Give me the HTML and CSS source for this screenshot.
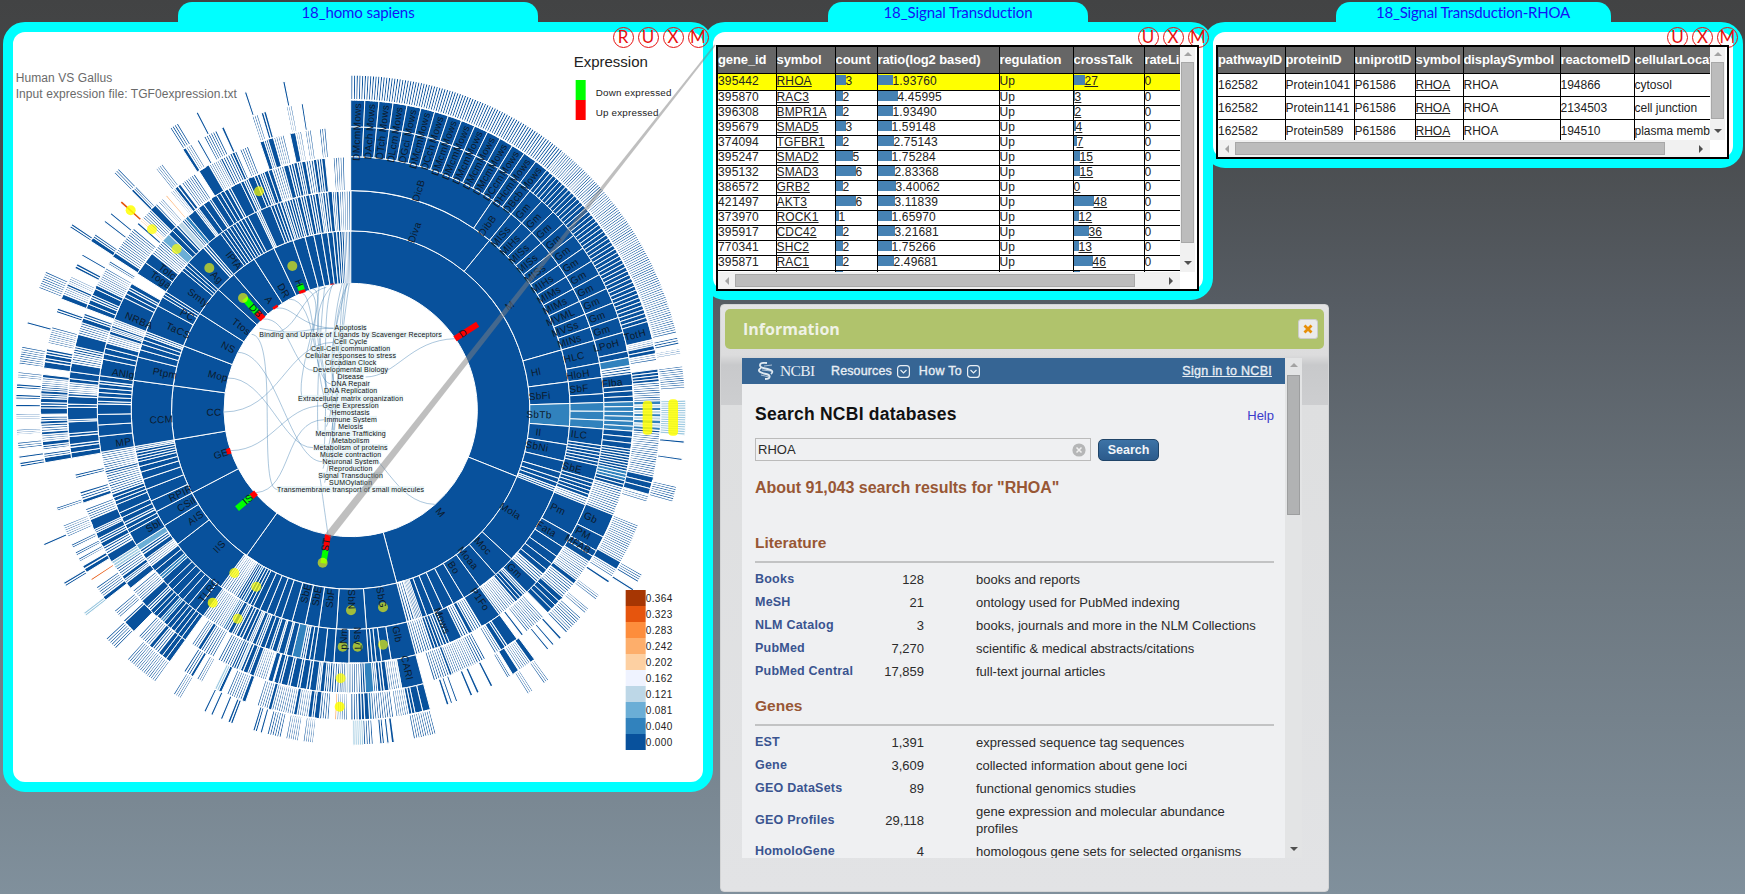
FILE: index.html
```html
<!DOCTYPE html>
<html lang="en">
<head>
<meta charset="utf-8">
<title>Pathway explorer</title>
<link rel="stylesheet" href="styles.css">
</head>
<body>
<section class="win win-main">
  <h2 class="tab">18_homo sapiens</h2>
  <div class="frame">
    <svg id="chart" class="chart" viewBox="40 96 2070 2250"></svg>
  </div>
  <div class="tools"><i>R</i><i>U</i><i>X</i><i>M</i></div>
</section>

<section class="win win-genes">
  <h2 class="tab">18_Signal Transduction</h2>
  <div class="frame"></div>
  <div class="tools"><i>U</i><i>X</i><i>M</i></div>
  <div class="grid">
    <div class="view">
      <table class="genes">
        <colgroup><col style="width:58px"><col style="width:59px"><col style="width:42px"><col style="width:122px"><col style="width:74px"><col style="width:71px"><col style="width:80px"></colgroup>
        <thead><tr><th>gene_id</th><th>symbol</th><th>count</th><th>ratio(log2 based)</th><th>regulation</th><th>crossTalk</th><th>rateLimit</th></tr></thead>
        <tbody id="genes"></tbody>
      </table>
    </div>
    <div class="vbar"><b class="up"></b><span class="thumb" style="height:181px"></span><b class="down"></b></div>
    <div class="hbar"><b class="left"></b><span class="thumb" style="width:400px"></span><b class="right"></b></div>
  </div>
</section>

<section class="win win-protein">
  <h2 class="tab">18_Signal Transduction-RHOA</h2>
  <div class="frame"></div>
  <div class="tools"><i>U</i><i>X</i><i>M</i></div>
  <div class="grid">
    <div class="view">
      <table class="proteins">
        <colgroup><col style="width:67px"><col style="width:69px"><col style="width:61px"><col style="width:48px"><col style="width:97px"><col style="width:74px"><col style="width:120px"></colgroup>
        <thead><tr><th>pathwayID</th><th>proteinID</th><th>uniprotID</th><th>symbol</th><th>displaySymbol</th><th>reactomeID</th><th>cellularLocation</th></tr></thead>
        <tbody>
          <tr><td>162582</td><td>Protein1041</td><td>P61586</td><td><u>RHOA</u></td><td>RHOA</td><td>194866</td><td>cytosol</td></tr>
          <tr><td>162582</td><td>Protein1141</td><td>P61586</td><td><u>RHOA</u></td><td>RHOA</td><td>2134503</td><td>cell junction</td></tr>
          <tr><td>162582</td><td>Protein589</td><td>P61586</td><td><u>RHOA</u></td><td>RHOA</td><td>194510</td><td>plasma membrane</td></tr>
        </tbody>
      </table>
    </div>
    <div class="vbar"><b class="up"></b><span class="thumb" style="height:57px"></span><b class="down"></b></div>
    <div class="hbar"><b class="left"></b><span class="thumb" style="width:430px"></span><b class="right"></b></div>
  </div>
</section>

<svg class="link" viewBox="0 0 720 560"><polygon points="714.3,44.5 715.7,45.5 331.500,538 325.500,533.500"/></svg>

<section class="dialog">
  <header class="dialog-head"><h3>Information</h3><button class="close"><svg viewBox="0 0 10 10"><path d="M1.5 1.5 8.5 8.5M8.5 1.5 1.5 8.5"/></svg></button></header>
  <div class="browser">
    <div class="page">
      <nav class="nav">
        <svg class="helix" viewBox="0 0 16 18"><path d="M9 1C0 0 0 5 7 6.500S16 9 13 12M3 6C-2 9 3 11 8 12S13 17 7 17"/><path class="thin" d="M6 4 14 3M4 8 13 9M3 13 11 15"/></svg>
        <span class="brand">NCBI</span>
        <span class="menu">Resources</span><svg class="drop" viewBox="0 0 13 13"><rect x=".6" y=".6" width="11.800" height="11.800" rx="3"/><path d="M3.500 5 6.500 8 9.500 5"/></svg>
        <span class="menu second">How To</span><svg class="drop" viewBox="0 0 13 13"><rect x=".6" y=".6" width="11.800" height="11.800" rx="3"/><path d="M3.500 5 6.500 8 9.500 5"/></svg>
        <span class="signin">Sign in to NCBI</span>
      </nav>
      <div class="content">
        <div class="title"><h1>Search NCBI databases</h1><a>Help</a></div>
        <div class="search"><div class="field"><span>RHOA</span><svg viewBox="0 0 14 14"><circle cx="7" cy="7" r="6.600"/><path d="M4.500 4.500 9.500 9.500M9.500 4.500 4.500 9.500"/></svg></div><div class="go">Search</div></div>
        <h4 class="about">About 91,043 search results for "RHOA"</h4>
        <h4 class="group">Literature</h4>
        <dl>
          <div><dt>Books</dt><dd class="n">128</dd><dd>books and reports</dd></div>
          <div><dt>MeSH</dt><dd class="n">21</dd><dd>ontology used for PubMed indexing</dd></div>
          <div><dt>NLM Catalog</dt><dd class="n">3</dd><dd>books, journals and more in the NLM Collections</dd></div>
          <div><dt>PubMed</dt><dd class="n">7,270</dd><dd>scientific &amp; medical abstracts/citations</dd></div>
          <div><dt>PubMed Central</dt><dd class="n">17,859</dd><dd>full-text journal articles</dd></div>
        </dl>
        <h4 class="group">Genes</h4>
        <dl>
          <div><dt>EST</dt><dd class="n">1,391</dd><dd>expressed sequence tag sequences</dd></div>
          <div><dt>Gene</dt><dd class="n">3,609</dd><dd>collected information about gene loci</dd></div>
          <div><dt>GEO DataSets</dt><dd class="n">89</dd><dd>functional genomics studies</dd></div>
          <div><dt>GEO Profiles</dt><dd class="n">29,118</dd><dd>gene expression and molecular abundance<br>profiles</dd></div>
          <div><dt>HomoloGene</dt><dd class="n">4</dd><dd>homologous gene sets for selected organisms</dd></div>
        </dl>
      </div>
    </div>
    <div class="vbar"><b class="up"></b><span class="thumb" style="height:140px"></span><b class="down"></b></div>
  </div>
</section>
<script src="chart.js"></script>
</body>
</html>
```
FILE: styles.css
```css
* { box-sizing: border-box; }
html, body { height: 100%; }
body {
  margin: 0;
  overflow: hidden;
  position: relative;
  font-family: "Liberation Sans", Arial, sans-serif;
  background: linear-gradient(#424344 0, #464849 100px, #565c63 300px, #69737b 520px, #7a8893 800px, #80909c 894px);
}
h1, h2, h3, h4, dl, dd { margin: 0; }

/* floating windows */
.win { position: absolute; top: 2px; display: flex; flex-direction: column; align-items: center; }
.win-main { left: 3px; width: 710px; height: 790px; z-index: 3; }
.win-genes { left: 703px; width: 510px; height: 298px; z-index: 2; }
.win-protein { left: 1203px; width: 540px; height: 166px; z-index: 1; }
.tab {
  height: 20px;
  border-radius: 14px 14px 0 0;
  background: #0ff;
  color: #1414f5;
  font: 400 15px/20px Lato, sans-serif;
  letter-spacing: -.1px;
  text-align: center;
}
.win-main .tab { width: 360px; }
.win-genes .tab { width: 260px; }
.win-protein .tab { width: 275px; letter-spacing: -.2px; }
.frame { flex: 1; width: 100%; border: 10px solid #0ff; border-radius: 22px; background: #fff; }
.chart { display: block; width: 690px; height: 750px; }
.tools { position: absolute; top: 25px; right: 5px; display: flex; gap: 4px; }
.win-main .tools, .win-genes .tools { right: 4.5px; }
.tools i {
  width: 21px; height: 21px;
  border: 1.3px solid #e81010; border-radius: 50%;
  color: #e81010;
  font: 400 17px/18px Lato, sans-serif;
  display: flex; justify-content: center;
}
.link { position: absolute; z-index: 4; left: 0; top: 0; width: 720px; height: 560px; fill: #808080; fill-opacity: .5; }

/* scrolling grids */
.grid {
  position: absolute; left: 13px; top: 43px;
  display: grid;
  border: 2px solid #000;
  background: #fff;
}
.win-genes .grid { width: 483px; height: 246px; grid-template: 225px 17px / 462px 15px; }
.win-protein .grid { width: 513px; height: 114px; grid-template: 93px 17px / 492px 15px; }
.view { overflow: hidden; }
table { border-collapse: collapse; table-layout: fixed; font-size: 12px; color: #222; }
.genes { width: 506px; }
.proteins { width: 536px; }
th, td { padding: 0; border-right: 1px solid #000; border-bottom: 1px solid #000; text-align: left; white-space: nowrap; overflow: hidden; }
th { height: 26px; background: #666; color: #fff; font-size: 13px; font-weight: 700; letter-spacing: -.1px; }
.genes td { height: 15px; line-height: 13px; letter-spacing: .15px; }
.genes tr.hit td { height: 17px; background: #ff0; }
.proteins td { height: 23px; }
.bar { display: inline-block; height: 10px; background: #4682b4; }
.vbar { background: #f1f1f1; display: flex; flex-direction: column; align-items: center; }
.hbar { background: #f1f1f1; display: flex; align-items: center; grid-column: 1; }
.vbar b, .hbar b { border: 4px solid transparent; }
.vbar .up { margin: 3px 0 5px; border-bottom: 4px solid #a3a3a3; border-top-width: 2px; }
.vbar .down { margin-top: auto; margin-bottom: 3px; border-top: 4px solid #505050; }
.hbar .left { margin: 0 6px 0 3px; border-right-color: #a3a3a3; }
.hbar .right { margin-left: auto; margin-right: 3px; border-left-color: #505050; }
.thumb { background: #bcbcbc; border: 1px solid #a8a8a8; }
.vbar .thumb { width: 13px; margin-top: 1px; }
.hbar .thumb { height: 13px; }

/* information dialog */
.dialog {
  position: absolute; left: 720px; top: 304px; width: 609px; height: 588px;
  border: 1px solid #d3d4d5; border-radius: 4px;
  background: linear-gradient(#e4e4e4 0, #dcdcdd 50px, #c8c9cb 60px, #cdced0 100px, #dedfe0 100px, #e2e3e5 587px);
  padding: 4px;
}
.dialog-head {
  height: 40px; border-radius: 5px; background: #b0c36c;
  display: flex; align-items: center; justify-content: space-between; padding: 0 6px 0 18px;
}
.dialog-head h3 { color: #eff2e6; font: 700 16px "Open Sans", sans-serif; }
.close { width: 20px; height: 20px; padding: 0; border: 1px solid #ccc; border-radius: 3px; background: #ebebeb; display: grid; place-items: center; }
.close svg { width: 10px; height: 10px; stroke: #e78f08; stroke-width: 2.8; fill: none; }
.browser { margin: 9px 0 0 17px; width: 560px; height: 500px; display: flex; }
.page { width: 543px; height: 500px; overflow: hidden; background: #eff0f2; }
.browser .vbar { width: 17px; background: #e3e4e5; }
.browser .thumb { background: #b1b2b3; border-color: #9d9e9f; margin-top: 3px; }
.nav { height: 26px; background: #366594; color: #e8eef4; display: flex; align-items: center; padding: 0 13px 0 16px; font-size: 12.5px; -webkit-text-stroke: .35px #e8eef4; }
.helix { width: 16px; height: 18px; fill: none; stroke: #dfe8f0; stroke-width: 1.8; }
.helix .thin { stroke-width: .7; }
.brand { font: 15.5px "Liberation Serif", serif; width: 34px; margin: 0 17px 0 6px; letter-spacing: -.6px; -webkit-text-stroke: 0; }
.drop { width: 13px; height: 13px; margin-left: 5px; fill: none; stroke: #e8eef4; stroke-width: 1.2; }
.menu { letter-spacing: .12px; }
.second { margin-left: 9px; letter-spacing: .3px; }
.signin { margin-left: auto; text-decoration: underline; letter-spacing: .28px; }
.content { padding: 0 11px 0 13px; color: #2b2b2b; font-size: 13px; }
.title { display: flex; justify-content: space-between; align-items: center; height: 61px; }
.title h1 { font-size: 17.5px; color: #111; letter-spacing: .25px; }
.title a { color: #3b3bcb; padding-top: 2px; }
.search { display: flex; align-items: center; gap: 7px; margin-top: -7px; }
.field { width: 336px; height: 23px; border: 1px solid #bbb; display: flex; justify-content: space-between; align-items: center; padding: 0 4px 0 2px; }
.field svg { width: 14px; height: 14px; fill: #b5b6b7; stroke: #f0f0f0; stroke-width: 1.5; }
.field circle { stroke: none; }
.go { width: 61px; height: 22px; border: 1px solid #1f4468; border-radius: 5px; background: linear-gradient(#3d73a6, #2c5b8c); color: #f2f5f8; font-weight: 700; text-align: center; line-height: 20px; font-size: 12.5px; }
.about, .group { color: #985735; font-size: 16px; }
.about { margin-top: 17px; line-height: 20px; letter-spacing: -.02px; }
.group { font-size: 15.5px; line-height: 20px; padding-bottom: 8px; border-bottom: 2px solid #c2c3c4; margin: 35px 0 4.5px; }
dl + .group { margin-top: 13.5px; margin-bottom: 5px; }
dl > div { display: grid; grid-template-columns: 109px 60px 1fr; align-items: center; line-height: 17px; padding: 3px 0; }
dt { font-weight: 700; color: #3a5490; font-size: 12.5px; letter-spacing: .22px; white-space: nowrap; }
dd.n { text-align: right; }
dd:last-child { padding-left: 52px; white-space: nowrap; }

/* sunburst */
.chart text { font-family: "Liberation Sans", Arial, sans-serif; fill: #222; }
.chart .arc-label { font-size: 30px; fill: #0c1a2b; text-anchor: middle; letter-spacing: 1px; }
.chart .core { font-size: 21px; fill: #111; text-anchor: middle; letter-spacing: .5px; }
.chart .core-bg { fill: #e2f1f6; }
.chart .edge { fill: none; stroke: #4682b4; stroke-opacity: .45; stroke-width: 3; }
.chart .caption { font-size: 36px; fill: #6a6a6a; letter-spacing: .25px; }
.chart .legend-title { font-size: 45px; }
.chart .legend-item { font-size: 29.5px; letter-spacing: .6px; }
.chart .scale-item { font-size: 30px; letter-spacing: 1.2px; }
```
FILE: chart.js
```js
const svg = document.getElementById('chart');
const CX = 1053, CY = 1230;
const R = k => 380 * Math.sqrt(k);
const rad = d => d * Math.PI / 180;
const at = (r, d) => [CX + r * Math.sin(rad(d)), CY - r * Math.cos(rad(d))];

function add(tag, attrs, text) {
  const e = document.createElementNS('http://www.w3.org/2000/svg', tag);
  for (const k in attrs) e.setAttribute(k, attrs[k]);
  if (text !== undefined) e.textContent = text;
  svg.appendChild(e);
  return e;
}

const COLORS = { s: '#08519c', h: '#08519c', m: '#3182bd', l: '#6baed6', p: '#bdd7e7', e: '#9ecae1', o: '#fdae6b', r: '#e6550d' };

function arc(ring, a, b, fill, stroke) {
  const r0 = R(ring), r1 = R(ring + 1), big = b - a > 180 ? 1 : 0;
  const p = [at(r0, a), at(r1, a), at(r1, b), at(r0, b)].map(q => q.map(v => v.toFixed(1)).join(' '));
  add('path', {
    d: `M${p[0]}L${p[1]}A${r1} ${r1} 0 ${big} 1 ${p[2]}L${p[3]}A${r0} ${r0} 0 ${big} 0 ${p[0]}Z`,
    fill, stroke: '#fff', 'stroke-width': stroke
  });
}

let seed = 7;
const rnd = () => (seed = (seed * 16807) % 2147483647) / 2147483647;

function block(ring, a, b, code, n) {
  if (code === '-') return;
  if (code === 'd') {
    let x = a, dark = true;
    while (x < b - 0.1) {
      const end = Math.min(b, x + (dark ? 0.4 + rnd() * 0.8 : 0.4 + rnd() * 0.5));
      block(ring, x, end, dark ? 's' : 'h', 0);
      x = end;
      dark = rnd() > (dark ? 0.65 : 0.15);
    }
    return;
  }
  const fine = 'heor'.includes(code);
  if (!n) n = fine ? Math.max(1, Math.round(rad(b - a) * R(ring + 0.5) / 6.6)) : 1;
  const w = (b - a) / n;
  const stroke = code === 'h' ? (n > 80 ? 4.9 : n < 3 ? 3.6 : 4.7) : code === 'o' || code === 'r' ? 4.2 : 3;
  for (let i = 0; i < n; i++) arc(ring, a + i * w, a + (i + 1) * w, COLORS[code], stroke);
}

/* Each ring lists boundary angles; a letter sets the fill up to the next angle. */
const RINGS = [
  '0 111.8 165.1 215.6 242.4 260.4 277.8 291 302.6 312.3 319.2 327.4 334.6 341.2 345.2 348.1 350.6 352.6 354.3 355.5 356.4 357.2 357.9 358.4 358.9 359.4 360',
  '0 39.3 74.1 82.6 88.3 m 94.3 99.1 103.5 106.6 108.2 109.4 110.6 h 111.8 132.8 138.6 143.9 148.9 152.1 155.1 157.6 159.7 161 s5 163 h 165.1 175.9 183.7 188.4 192 195.5 198.4 200.4 202.5 204.5 206.4 s3 209 m 209.6 s3 211.5 h 216.3 232.2 238.2 242.4 245.5 248.8 251.5 253.5 255 256.3 s4 259.4 h 260.4 277.8 284 286 287.5 288.7 289.8 h 291 298.4 301 s2 302.6 309.6 s3 312.3 317.8 h 319.2 323.6 s4 327.4 s3 330 s2 332 s 334.6 h 335.6 338.6 s3 341.2 h 342 d 345.2 h 345.8 346.8 h 348.1 349.2 h 350.6 351.6 h 352.6 h 354 s 355.2 h 356.2 s 357 h 360',
  '0 34.1 39.3 s11 74.1 79.3 82.6 86.3 88.3 m3 94.3 98.1 s6 102.7 106 s5 110.4 h 112 119.5 122.9 125.4 127.4 129.2 130.5 h 132.8 136 h 137 s3 139.4 h 144 148.9 h 151.2 152.2 h 154 157 s2 158.4 h 159 s3 161.2 h 165.1 170.8 173 174.2 175.1 175.9 180.4 183.8 186 188.4 s2 190.4 h 191.4 m 193.4 s 194.8 h 195.2 196.6 h 197 198.2 h 198.7 s2 201 h 202 d 207 h 208 s 209 h 210 m 210.5 h 212 h 215.6 s2 219.8 221.5 223 224.8 226.3 228 m2 229.2 230.6 232 h 234 s 235.2 h 236.4 l 237.8 241 s2 243 h 243.6 s2 246 248 s3 250.6 h 255.6 s 256.2 h 260.4 264 266.6 269 271.4 h 272 s4 276 h 276.6 277.8 281.6 s3 285.4 h 287.4 s 288.2 h 289 s 289.6 h 291 296.4 s2 298.4 h 299 300 - 302.6 305.7 308.3 h 312 l 314 s 315.2 s 316.4 h 317 p 318.2 h 319.2 m 320 s 322.2 h 323 324.4 326 h 326.5 328 s3 331 h 331.6 334.2 335 h 336 s 337.6 s2 339 h 340 s2 342 h 344.6 s 345.8 h 347 s 347.8 h 348.8 s 349.8 h 351.5 s 352.3 h 353.4 s 354.2 - 356 h 358.6',
  '0 s13 34.1 s2 39.3 s11 74.1 78 79.3 m 81 h 82.6 85 s3 88.3 m6 94.3 s3 98 s8 102.5 m3 104.5 s2 106 h 111.8 116.7 119.8 s2 122.5 h 127 s 128 h 131.5 s4 135.8 - 137 h 141.6 - 142.4 h 142.9 - 144 s 146.4 h 146.9 s 148 h 149.4 - 151.5 h 153.6 h 159 s 159.6 h 163 - 165.1 169.6 p 170 h 172.2 s 173.2 h 173.8 s 174.5 h 175.3 m 177 s2 178 h 180.4 p 180.9 s 181.2 h 182 s 182.4 h 184 d 187 s 188.4 h 189 190.4 h 190.9 192.4 h 192.9 194.3 h 194.8 195.8 h 196 197 - 197.4 h 200 s 201 h 201.4 s 202.4 h 203 p 203.5 h 204.5 s 205 h 208 - 209 h 212 s 212.8 h 214.2 - 215.7 s6 221.4 m2 222.3 s3 225 h 226 s 227.6 h 230.4 - 231 s 232.4 h 233.2 s 234 h 236 e 237.6 s 239.4 h 241 s 242 h 243 s 244.2 h 245 s 247.2 h 249.6 - 250.8 s 251.6 h 253.2 - 256 h 256.9 - 260.2 s2 262.4 h 263 s 264.6 h 265.2 267.6 h 268 270.6 h 271.2 s 272.8 h 273.4 h 275.6 276.4 s 277.8 s 279.6 h 282 h 283 s 285.6 h 288 s 289 h 290 - 291 s2 293 h 294 s 295.4 s 296.2 h 300.2 - 301 h 301.8 - 302.8 s 303.8 h 310 - 311 h 311.5 - 311.9 o 312.7 h 315 s 316.4 h 316.8 - 317.2 h 318.4 - 319.1 o 319.5 - 320.4 h 321.6 s 322.3 h 323 - 323.3 h 326.6 - 327.6 s 330 h 332.6 s 333.1 h 335.2 s 335.8 h 336.2 - 336.9 h 338.8 - 341.3 s 342.2 h 343 s 344.2 h 346.4 - 347.6 s 348.8 h 350 - 350.7 h 352 - 353.6 h 355',
  '0 s13 34.1 s2 39.3 s44 73.4 76.9 h 78 s2 79.6 h 80.8 - 82.4 s4 84.8 h 88.3 m 89 p 89.5 m 90.1 p 90.7 m 91.3 p 91.9 m 92.6 p 93.2 m 93.8 h 94.3 h 102.5 s3 105.8 - 106.1 h 107.3 - 111.8 h 119.4 s 121 h 122.6 - 123.4 h 123.9 - 126.6 h 127.8 - 129.8 h 131 - 132 h 136 - 137.2 h 137.7 - 139 h 139.4 - 140.3 h 140.7 - 143.6 s 144.6 h 147 - 147.2 s 148.5 - 149 h 149.7 - 152.7 h 153.2 - 155.5 h 156 - 156.8 h 157.3 - 159.8 h 160.2 - 160.8 h 161.2 - 161.5 h 162 - 165.1 s2 168 s2 169.2 h 171.6 - 172 h 176 m 176.5 s 177.4 h 178 s 178.6 h 180 - 180.6 h 182.6 o 183 - 184 h 185.8 s 186.8 h 187.2 s 188 h 190 s 190.7 h 194.8 s 195.5 h 197.6 - 199.8 s 200.6 h 203.6 - 204.6 s 205.2 e 206 - 208.6 h 209.8 - 210.6 s 211.2 h 212.6 - 215.7 s3 218.4 h 219.8 s 220.6 h 223.2 - 224.4 s 226.8 h 227.2 - 228 h 229.7 - 232.2 s 233 h 235.2 - 236.6 r 237 - 238.4 s 239.2 h 239.8 - 240.7 h 241.4 - 242 h 242.7 - 243.6 h 244.3 - 245.8 h 248.2 - 251 h 251.7 - 260.2 261.2 h 262 - 262.6 h 263.4 264.2 h 265.4 266 h 267.4 s 268 h 268.8 - 269.2 s 270.4 h 271.4 s 272.2 h 273 s 273.6 h 274.4 h 276 s 276.6 - 277.8 s 279 h 279.6 s 280.4 h 281.4 - 282.4 h 285.6 - 288.3 h 289.2 - 291 s 292 h 293.6 s 294.1 h 295.6 - 297.2 h 298.2 - 299.8 h 300.2 - 303 s 303.8 h 304.6 - 307.3 h 307.7 - 309.1 h 309.5 - 311.9 r 312.5 - 315 s 315.5 h 316.2 - 321 h 322.6 - 327.2 s 327.9 h 329.1 - 330.3 h 330.7 - 331.7 h 334.4 - 335.4 h 335.9 - 341.4 h 342.6 - 343.2 h 344.2 - 348 h 349.1 - 350.8 h 351.2',
  '0 h85 39.3 h 42.4 h 45.6 h 48.8 h 51.9 h 55.1 h 58.3 h 61.4 h 64.6 h 67.8 h 70.9 h 74 h 76.7 - 77.4 h 78.7 - 79.4 h 80.4 - 82.4 h 86.3 - 88.3 e 94.3 - 95.3 h 95.7 - 98.3 h 98.7 - 103.2 h 106 - 119.4 h 121 - 122.3 h 122.7 - 143.7 h 144.8 - 147 h 148.1 - 165.2 h 169.2 - 172.5 h 173 - 173.4 h 173.8 - 174.2 h 175 - 176.1 h 177.8 e 179.6 - 186.4 h 188.2 - 189 h 191.2 - 192 h 194.5 - 195.3 h 195.7 - 196.2 h 197 - 200.6 h 201.5 - 202.5 h 202.9 - 204.3 h 204.7 - 205.6 h 206 - 210.5 h 212 - 215.7 h 221.9 - 224.5 h 227 - 232.1 e 232.8 - 238.2 h 239 - 246.1 h 246.5 - 260.2 h 261 - 261.7 h 262.1 - 263.3 h 264.5 - 265.7 h 266.7 - 268.4 h 269.4 - 270.6 h 271 - 271.9 h 272.7 - 273.7 h 274.5 - 275.5 h 276.6 - 277.9 h 281 - 284.9 h 285.3 - 291.3 h 294.5 - 303 h 303.8 - 315 h 316.2 - 327.3 h 329 - 332.5 h 332.9 - 341.5 h 341.9 - 348.3 h 348.7'
];

RINGS.forEach((spec, i) => {
  const tokens = spec.split(' ');
  let prev = +tokens[0], code = 's', n = 0;
  for (const t of tokens.slice(1)) {
    if (/^\d/.test(t)) {
      block(i + 1, prev, +t, code, n);
      prev = +t; code = 's'; n = 0;
    } else {
      code = t[0]; n = +t.slice(1) || 0;
    }
  }
});

/* expression bars */
[['#f00', 18, 1366, 1016, 1434, 973], ['#f00', 18, 985, 1604, 978, 1650], ['#0f0', 18, 978, 1650, 971, 1690],
 ['#f00', 18, 769, 1478, 755, 1490], ['#0f0', 18, 755, 1490, 712, 1526], ['#f00', 18, 693, 1352, 680, 1356],
 ['#f00', 20, 790, 957, 772, 938], ['#0f0', 20, 772, 938, 735, 895], ['#f00', 8, 820, 926, 834, 917],
 ['#f00', 20, 909, 879, 906, 870], ['#0f0', 20, 906, 870, 900, 852], ['#f00', 3, 992, 853, 1004, 852]
].forEach(([c, w, x1, y1, x2, y2]) => add('line', { x1, y1, x2, y2, stroke: c, 'stroke-width': w }));

/* highlighted nodes */
[[393, 631, .85], [457, 688, .75], [531, 747, .7], [629, 804], [730, 894], [878, 798], [778, 574, .7], [969, 1688], [704, 1719, .75],
 [770, 1760, .7], [639, 1808, .8], [714, 1856, .7], [1054, 1831], [1029, 1940], [1074, 1940], [1023, 2035, .75], [1020, 2120, .85],
 [1150, 1822], [1150, 1934]
].forEach(([cx, cy, o]) => add('circle', { cx, cy, r: 15, fill: '#ff0', 'fill-opacity': o || .62 }));
add('rect', { x: 1929, y: 1202, width: 29, height: 102, rx: 12, fill: '#ff0', 'fill-opacity': .85 });
add('rect', { x: 2006, y: 1198, width: 29, height: 109, rx: 12, fill: '#ff0', 'fill-opacity': .85 });

/* arc labels follow the radius and are flipped on the left half */
function label(text, x, y) {
  let a = Math.atan2(y - CY, x - CX) * 180 / Math.PI;
  if (x < CX - 12) a += 180;
  add('text', { class: 'arc-label', transform: `translate(${x.toFixed(1)} ${y.toFixed(1)}) rotate(${a.toFixed(1)})`, dy: 10 }, text);
}
function row(words, ring, a0, a1) {
  const w = (a1 - a0) / words.length;
  words.forEach((t, i) => { const [x, y] = at(ring, a0 + (i + .5) * w); label(t, x, y); });
}
row(['DMcm', 'DAch', 'DTch', 'DLcm', 'DGci', 'DMcm', 'DCch', 'DMcm', 'DMcm', 'DMcm', 'DMcm', 'DMcm', 'DCcm', 'DHcm', 'DBcb'], 793, 0, 39.3);
row(Array(15).fill('Mows'), 880, 0, 39.3);
row(['MISs', 'MIHs', 'MISs', 'MISs', 'MISs', 'MIHs', 'MIMs', 'MIMs', 'MVML', 'MVSs', 'MINs'], 688, 39.3, 74.1);
row(Array(11).fill('Gm'), 790, 39.3, 74.1);
[['DicB', 1257, 572], ['Diva', 1245, 697], ['DibB', 1463, 677], ['M', 1530, 917], ['D', 1391, 1000], ['HLC', 1723, 1072], ['LPoH', 1820, 1037],
 ['TotH', 1906, 1005], ['Hl', 1609, 1117], ['HloH', 1735, 1124], ['SbF', 1738, 1166], ['Flba', 1838, 1149], ['SbFi', 1620, 1188], ['SbTb', 1618, 1244],
 ['Il', 1616, 1297], ['ILC', 1738, 1304], ['SbNi', 1612, 1339], ['SbE', 1718, 1403], ['Mola', 1532, 1533], ['Pm', 1675, 1527], ['Gb', 1773, 1553],
 ['Fata', 1640, 1587], ['PM', 1750, 1600], ['MFAB', 1735, 1632], ['M', 1322, 1538], ['Moc', 1450, 1638], ['Gm', 1545, 1712], ['Moaa', 1405, 1674],
 ['Bo', 1362, 1703], ['P1Fo', 1441, 1798], ['Mows', 1328, 1862], ['SbG', 1145, 1792], ['Glb', 1193, 1903], ['CARl', 1222, 2003], ['SbN', 1056, 1798],
 ['NsvT', 1074, 1918], ['pNm', 1032, 1916], ['SbF', 992, 1795], ['SbE', 952, 1788], ['SbE', 919, 1780], ['ST', 979, 1634], ['TLRC', 628, 1771],
 ['IIS', 659, 1640], ['AIS', 588, 1554], ['CSil', 560, 1513], ['RPIR', 543, 1480], ['Sbl', 461, 1578], ['IS', 745, 1498], ['GE', 664, 1362],
 ['CC', 643, 1237], ['CCM', 485, 1259], ['MP', 371, 1327], ['Mop', 655, 1128], ['Ptpm', 496, 1120], ['ANlg', 371, 1121], ['NS', 686, 1042],
 ['TaCS', 536, 992], ['PC', 563, 945], ['NRBA', 418, 962], ['Ttos', 725, 980], ['Smty', 596, 893], ['Toga', 484, 840], ['Tolc', 503, 815],
 ['DB', 768, 932], ['Ag', 652, 832], ['lPfA', 703, 782], ['A', 808, 900], ['DR', 852, 872], ['H', 898, 850]
].forEach(l => label(...l));

/* links between names and their arcs */
const edges = ['M780 985C900 1010 900 985 1000 985', 'M830 925C880 915 900 985 1010 985', 'M790 957C870 950 880 1111 940 1111', 'M868 897C960 900 930 1140 995 1153',
 'M756 1003C840 1010 770 1480 835 1468', 'M715 1057C830 1060 870 1385 968 1385', 'M683 1134C800 1130 850 1345 940 1343', 'M673 1236C840 1235 860 1030 1000 1027',
 'M693 1352C820 1350 850 1217 970 1217', 'M769 1478C880 1470 850 1260 975 1259', 'M985 1604C970 1500 965 1460 960 1427', 'M1366 1016C1230 1020 1190 1130 1098 1131',
 'M1305 1513C1180 1510 1150 1340 1050 1330', 'M820 1000C900 990 900 880 980 862', 'M908 880C950 890 950 1230 1000 1237', 'M925 870C985 900 910 1080 940 1048',
 'M940 866C990 880 890 1100 906 1190', 'M958 862C940 1000 1000 1250 985 1170', 'M975 860C960 1000 950 1200 955 1300', 'M1000 852C960 930 990 1200 970 1385',
 'M1003 852C900 950 990 1130 985 1230', 'M1028 850C985 1000 1000 1200 1000 1406', 'M1034 850C1010 1000 1030 1200 970 1406', 'M1040 850C1020 1000 1020 1250 975 1448',
 'M1045 850C980 960 1020 1200 980 1280', 'M1049 850C1010 1100 1010 1300 990 1427', 'M1043 850C1000 1000 980 1100 1010 1164'];
edges.forEach(d => add('path', { class: 'edge', d }));

const names = ['Apoptosis', 'Binding and Uptake of Ligands by Scavenger Receptors', 'Cell Cycle', 'Cell-Cell communication', 'Cellular responses to stress',
 'Circadian Clock', 'Developmental Biology', 'Disease', 'DNA Repair', 'DNA Replication', 'Extracellular matrix organization', 'Gene Expression', 'Hemostasis',
 'Immune System', 'Meiosis', 'Membrane Trafficking', 'Metabolism', 'Metabolism of proteins', 'Muscle contraction', 'Neuronal System', 'Reproduction',
 'Signal Transduction', 'SUMOylation', 'Transmembrane transport of small molecules'];
names.forEach((t, i) => {
  const y = 984 + i * 21.05;
  const bg = add('rect', { class: 'core-bg', 'fill-opacity': .75 });
  const e = add('text', { class: 'core', x: 1053, y: y + 7 }, t);
  const w = e.getComputedTextLength();
  bg.setAttribute('x', 1053 - w / 2); bg.setAttribute('y', y - 10);
  bg.setAttribute('width', w); bg.setAttribute('height', 20);
});

/* captions and legends */
add('text', { class: 'caption', x: 48, y: 246 }, 'Human VS Gallus');
add('text', { class: 'caption', x: 48, y: 294 }, 'Input expression file: TGF0expression.txt');
add('text', { class: 'legend-title', x: 1722, y: 201 }, 'Expression');
add('rect', { x: 1728, y: 240, width: 30, height: 60, fill: '#0f0' });
add('rect', { x: 1728, y: 300, width: 30, height: 60, fill: '#f00' });
add('text', { class: 'legend-item', x: 1788, y: 289 }, 'Down expressed');
add('text', { class: 'legend-item', x: 1788, y: 349 }, 'Up expressed');
['#a63603', '#e6550d', '#fd8d3c', '#fdae6b', '#fdd0a2', '#eff3ff', '#bdd7e7', '#6baed6', '#3182bd', '#08519c'].forEach((fill, i) => {
  add('rect', { x: 1878, y: 1770 + i * 48, width: 60, height: 48, fill });
  add('text', { class: 'scale-item', x: 1938, y: 1806 + i * 48 },
    ['0.364', '0.323', '0.283', '0.242', '0.202', '0.162', '0.121', '0.081', '0.040', '0.000'][i]);
});

/* gene table rows: id, symbol, count, bar, ratio, bar, crosstalk, bar */
const genes = [['395442', 'RHOA', 3, 10, '1.93760', 15, 27, 11], ['395870', 'RAC3', 2, 7, '4.45995', 20, 3, 1], ['396308', 'BMPR1A', 2, 7, '1.93490', 15, 2, 1],
 ['395679', 'SMAD5', 3, 10, '1.59148', 14, 4, 2], ['374094', 'TGFBR1', 2, 7, '2.75143', 16, 7, 3], ['395247', 'SMAD2', 5, 17, '1.75284', 14, 15, 6],
 ['395132', 'SMAD3', 6, 20, '2.83368', 17, 15, 6], ['386572', 'GRB2', 2, 7, '3.40062', 18, 0, 0], ['421497', 'AKT3', 6, 20, '3.11839', 17, 48, 20],
 ['373970', 'ROCK1', 1, 3, '1.65970', 14, 12, 5], ['395917', 'CDC42', 2, 7, '3.21681', 17, 36, 15], ['770341', 'SHC2', 2, 7, '1.75266', 14, 13, 5],
 ['395871', 'RAC1', 2, 7, '2.49681', 16, 46, 19], ['', '', '', 7, '', 0, '', 6]];
const bar = w => `<span class="bar" style="width:${w}px"></span>`;
document.getElementById('genes').innerHTML = genes.map((g, i) =>
  `<tr${i ? '' : ' class="hit"'}><td>${g[0]}</td><td><u>${g[1]}</u></td><td>${bar(g[3])}${g[2]}</td><td>${bar(g[5])}${g[4]}</td><td>${g[0] ? 'Up' : ''}</td><td>${bar(g[7])}<u>${g[6]}</u></td><td>${g[0] ? '0' : ''}</td></tr>`).join('');
```
